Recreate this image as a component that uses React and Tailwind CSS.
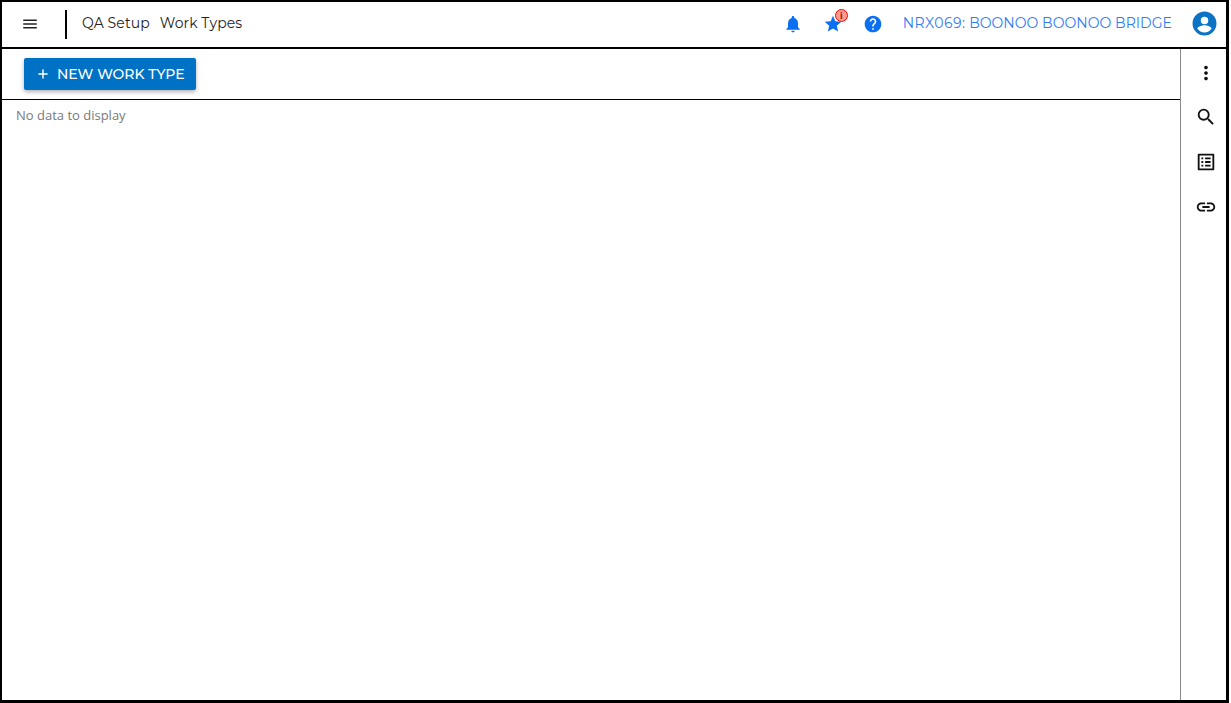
import React from 'react';
import { Plus } from 'lucide-react';

const font = "font-['Montserrat','Inter','Liberation_Sans',sans-serif]";

const App = () => {
  return (
    <div className="h-[703px] w-[1231px] overflow-hidden bg-white pr-[2px]">
      <div className={`flex h-[703px] w-[1229px] flex-col border-[2px] border-r-[3px] border-b-[3px] border-black ${font}`}>
        {/* top bar */}
        <header className="flex h-[47px] shrink-0 items-center border-b-2 border-black">
          <div className="flex w-[63px] shrink-0 items-center pl-[19px]">
            <svg className="-mt-[1px]" width="18" height="18" viewBox="0 0 24 24" fill="#222">
              <path d="M3 18h18v-2H3v2zm0-5h18v-2H3v2zm0-7v2h18V6H3z" />
            </svg>
          </div>
          <div className="-mt-[1px] h-[29px] w-[2px] shrink-0 bg-black" />
          <div className="-mt-[2px] ml-[15px] flex gap-[10px] text-[14px] tracking-[0.1px] text-[#222]">
            <span>QA Setup</span>
            <span>Work Types</span>
          </div>
          <div className="-mt-[1px] ml-auto flex items-center">
            <svg width="20" height="20" viewBox="0 0 24 24" fill="#0b6ff2">
              <path d="M12 22c1.1 0 2-.9 2-2h-4c0 1.1.9 2 2 2zm6-6v-5c0-3.07-1.63-5.64-4.5-6.32V4c0-.83-.67-1.5-1.5-1.5s-1.5.67-1.5 1.5v.68C7.64 5.36 6 7.92 6 11v5l-2 2v1h16v-1l-2-2z" />
            </svg>
            <div className="relative ml-[20px]">
              <svg width="20" height="20" viewBox="0 0 24 24" fill="#0b6ff2">
                <path d="M12 17.27 18.18 21l-1.64-7.03L22 9.24l-7.19-.61L12 2 9.19 8.63 2 9.24l5.46 4.73L5.82 21z" />
              </svg>
              <span className="absolute right-[-5px] top-[-5px] flex h-[13px] w-[13px] items-center justify-center rounded-full border border-[#f00] bg-[#fb9c90] text-[9px] font-bold leading-none text-[#a11]">
                i
              </span>
            </div>
            <svg className="ml-[20px]" width="20" height="20" viewBox="0 0 24 24" fill="#0b6ff2">
              <path d="M12 2C6.48 2 2 6.48 2 12s4.48 10 10 10 10-4.48 10-10S17.52 2 12 2zm1 17h-2v-2h2v2zm2.07-7.75-.9.92C13.45 12.9 13 13.5 13 15h-2v-.5c0-1.1.45-2.1 1.17-2.83l1.24-1.26c.37-.36.59-.86.59-1.41 0-1.1-.9-2-2-2s-2 .9-2 2H8c0-2.21 1.79-4 4-4s4 1.79 4 4c0 .88-.36 1.68-.93 2.25z" />
            </svg>
            <span className="-mt-[1px] ml-[20px] whitespace-nowrap text-[14px] text-[#2f7cf6]">
              <span className="tracking-[0.5px]">NRX069:</span>{' '}
              <span className="tracking-[0.05px]">BOONOO BOONOO BRIDGE</span>
            </span>
            <svg className="-mt-[1px] ml-[20px] mr-[9px]" width="25" height="25" viewBox="0 0 24 24" fill="#0b72c4">
              <path d="M12 0.5a11.5 11.5 0 1 0 0 23 11.5 11.5 0 0 0 0-23zm0 5a3.6 3.6 0 1 1 0 7.2 3.6 3.6 0 0 1 0-7.2zm0 15.2c-2.8 0-5.3-1.4-6.8-3.6 0-2.2 4.5-3.5 6.8-3.5s6.8 1.3 6.8 3.5c-1.5 2.2-4 3.6-6.8 3.6z" />
            </svg>
          </div>
        </header>

        <div className="flex min-h-0 flex-1">
          {/* main */}
          <main className="min-w-0 flex-1">
            <div className="flex h-[51px] items-start border-b border-black pl-[22px] pt-[9px]">
              <button className="flex h-[32px] w-[172px] items-center rounded-[2px] bg-[#0072c6] pl-[12px] text-[14px] font-medium text-white shadow-[0_2px_4px_rgba(0,0,0,0.3)]">
                <Plus size={14} strokeWidth={2.5} />
                <span className="ml-[7px] whitespace-nowrap">NEW WORK TYPE</span>
              </button>
            </div>
            <p className="pl-[14px] pt-[7px] font-['Open_Sans',sans-serif] text-[13px] leading-[16px] text-[#7a7a7a]">No data to display</p>
          </main>

          {/* right rail */}
          <aside className="flex w-[46px] shrink-0 flex-col items-center border-l border-[#8a8a8a] pl-[4px] pt-[13px]">
            <svg width="22" height="22" viewBox="0 0 24 24" fill="#111">
              <path d="M12 8c1.1 0 2-.9 2-2s-.9-2-2-2-2 .9-2 2 .9 2 2 2zm0 2c-1.1 0-2 .9-2 2s.9 2 2 2 2-.9 2-2-.9-2-2-2zm0 6c-1.1 0-2 .9-2 2s.9 2 2 2 2-.9 2-2-.9-2-2-2z" />
            </svg>
            <svg className="mt-[22px]" width="22" height="22" viewBox="0 0 24 24" fill="#111">
              <path d="M15.5 14h-.79l-.28-.27A6.47 6.47 0 0 0 16 9.5 6.5 6.5 0 1 0 9.5 16c1.61 0 3.09-.59 4.23-1.57l.27.28v.79l5 4.99L20.49 19l-4.99-5zm-6 0C7.01 14 5 11.99 5 9.5S7.01 5 9.5 5 14 7.01 14 9.5 11.99 14 9.5 14z" />
            </svg>
            <svg className="mt-[23px]" width="22" height="22" viewBox="0 0 24 24" fill="#111">
              <path d="M19 5v14H5V5h14m1.1-2H3.9c-.5 0-.9.4-.9.9v16.2c0 .4.4.9.9.9h16.2c.4 0 .9-.5.9-.9V3.9c0-.5-.5-.9-.9-.9zM11 7h6v2h-6V7zm0 4h6v2h-6v-2zm0 4h6v2h-6v-2zM7 7h2v2H7V7zm0 4h2v2H7v-2zm0 4h2v2H7v-2z" />
            </svg>
            <svg className="mt-[23px]" width="22" height="22" viewBox="0 0 24 24" fill="#111">
              <path d="M3.9 12c0-1.71 1.39-3.1 3.1-3.1h4V7H7c-2.76 0-5 2.24-5 5s2.24 5 5 5h4v-1.9H7c-1.71 0-3.1-1.39-3.1-3.1zM8 13h8v-2H8v2zm9-6h-4v1.9h4c1.71 0 3.1 1.39 3.1 3.1s-1.39 3.1-3.1 3.1h-4V17h4c2.76 0 5-2.24 5-5s-2.24-5-5-5z" />
            </svg>
          </aside>
        </div>
      </div>
    </div>
  );
};

export default App;
